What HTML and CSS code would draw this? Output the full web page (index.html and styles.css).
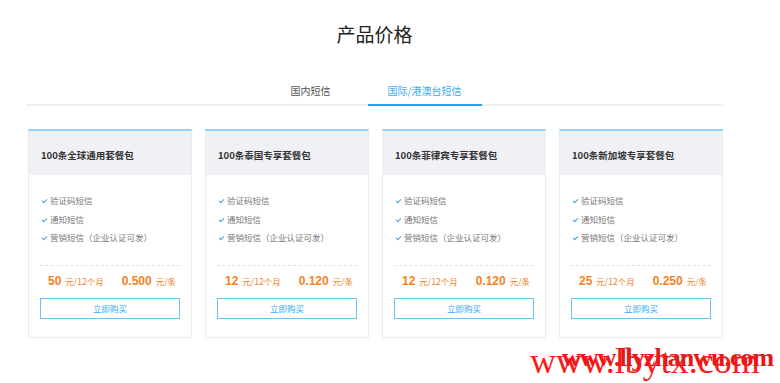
FILE: index.html
```html
<!DOCTYPE html>
<html lang="zh-CN">
<head>
  <meta charset="UTF-8">
  <title>产品价格</title>
  <link rel="stylesheet" href="styles.css">
</head>
<body>
<div class="wrap">
  <h2 class="title">产品价格</h2>
  <div class="tabs">
    <a href="javascript:void(0);" class="tab">国内短信</a>
    <a href="javascript:void(0);" class="tab active">国际/港澳台短信</a>
  </div>
  <div class="cards">
    <div class="card">
      <div class="card-head">100条全球通用套餐包</div>
      <div class="card-body">
        <ul class="features">
          <li>验证码短信</li>
          <li>通知短信</li>
          <li>营销短信（企业认证可发）</li>
        </ul>
        <div class="price">
          <span class="num">50</span><span class="unit">元/12个月</span>
          <span class="num">0.500</span><span class="unit">元/条</span>
        </div>
        <a href="javascript:void(0);" class="buy">立即购买</a>
      </div>
    </div>
    <div class="card">
      <div class="card-head">100条泰国专享套餐包</div>
      <div class="card-body">
        <ul class="features">
          <li>验证码短信</li>
          <li>通知短信</li>
          <li>营销短信（企业认证可发）</li>
        </ul>
        <div class="price">
          <span class="num">12</span><span class="unit">元/12个月</span>
          <span class="num">0.120</span><span class="unit">元/条</span>
        </div>
        <a href="javascript:void(0);" class="buy">立即购买</a>
      </div>
    </div>
    <div class="card">
      <div class="card-head">100条菲律宾专享套餐包</div>
      <div class="card-body">
        <ul class="features">
          <li>验证码短信</li>
          <li>通知短信</li>
          <li>营销短信（企业认证可发）</li>
        </ul>
        <div class="price">
          <span class="num">12</span><span class="unit">元/12个月</span>
          <span class="num">0.120</span><span class="unit">元/条</span>
        </div>
        <a href="javascript:void(0);" class="buy">立即购买</a>
      </div>
    </div>
    <div class="card">
      <div class="card-head">100条新加坡专享套餐包</div>
      <div class="card-body">
        <ul class="features">
          <li>验证码短信</li>
          <li>通知短信</li>
          <li>营销短信（企业认证可发）</li>
        </ul>
        <div class="price">
          <span class="num">25</span><span class="unit">元/12个月</span>
          <span class="num">0.250</span><span class="unit">元/条</span>
        </div>
        <a href="javascript:void(0);" class="buy">立即购买</a>
      </div>
    </div>
  </div>
</div>
<div class="mark">
  <span class="mark-a">www.lbytx.com</span>
  <span class="mark-b">www.llyzhanwu.com</span>
</div>
</body>
</html>
```

FILE: styles.css
```css
* {
  margin: 0;
  padding: 0;
  box-sizing: border-box;
}
html, body {
  width: 100%;
  height: 100%;
  background: #fff;
  overflow: hidden;
}
body {
  font-family: "Noto Sans CJK SC", "Liberation Sans", sans-serif;
  color: #333;
}
a {
  text-decoration: none;
}
ul {
  list-style: none;
}
.wrap {
  width: 697px;
  margin-left: 26px;
  padding-top: 20px;
}
.title {
  text-align: center;
  font-size: 19px;
  font-weight: normal;
  line-height: 28px;
  color: #222;
}
.tabs {
  display: flex;
  justify-content: center;
  margin-top: 30px;
  padding-right: 14px;
  border-bottom: 2px solid #f1f1f1;
}
.tab {
  width: 114px;
  text-align: center;
  font-size: 10px;
  line-height: 26px;
  color: #555;
  margin-bottom: -2px;
  border-bottom: 2px solid transparent;
}
.tab.active {
  color: #3aa9f0;
  border-bottom-color: #1ea7f2;
}
.cards {
  display: flex;
  gap: 13px;
  margin-top: 23px;
  padding-left: 2px;
}
.card {
  flex: 0 0 164px;
  min-width: 0;
  border: 1px solid #ececec;
  border-top: 2px solid #8fd3fa;
}
.card-head {
  background: #f0f1f5;
  height: 44px;
  line-height: 20px;
  padding: 14px 0 0 12px;
  font-size: 9.5px;
  font-weight: bold;
  color: #333;
}
.card-body {
  padding: 16px 11px 18px 11px;
}
.features li {
  font-size: 8.5px;
  line-height: 18.5px;
  color: #777;
  padding-left: 10px;
  position: relative;
}
.features li::before {
  content: "";
  position: absolute;
  left: 2px;
  top: 8px;
  width: 4px;
  height: 2px;
  border-left: 1px solid #3aa7ef;
  border-bottom: 1px solid #3aa7ef;
  transform: rotate(-45deg);
}
.price {
  display: flex;
  align-items: baseline;
  margin-top: 18px;
  border-top: 1px dashed #e3e3e3;
  padding-left: 8px;
  height: 33px;
  line-height: 31px;
  color: #f5821f;
  white-space: nowrap;
}
.price .num {
  font-family: "Liberation Sans", sans-serif;
  font-size: 12px;
  font-weight: bold;
  margin-right: 4px;
}
.price .unit {
  font-size: 8.5px;
  margin-right: 18px;
}
.price .unit:last-child {
  margin-right: 0;
}
.buy {
  display: block;
  height: 21px;
  line-height: 19px;
  border: 1px solid #6cc3f5;
  text-align: center;
  font-size: 8.5px;
  color: #3aa7ef;
}
.mark {
  position: absolute;
  left: 530px;
  top: 340px;
  width: 250px;
  height: 43px;
}
.mark-a {
  position: absolute;
  left: 0;
  top: 0;
  font-family: "Liberation Serif", serif;
  font-size: 36px;
  color: #f71c1c;
  white-space: nowrap;
}
.mark-b {
  position: absolute;
  left: 32px;
  top: 3px;
  font-family: "Liberation Serif", serif;
  font-size: 26px;
  font-weight: bold;
  letter-spacing: -1px;
  color: #e81818;
  white-space: nowrap;
}
```
